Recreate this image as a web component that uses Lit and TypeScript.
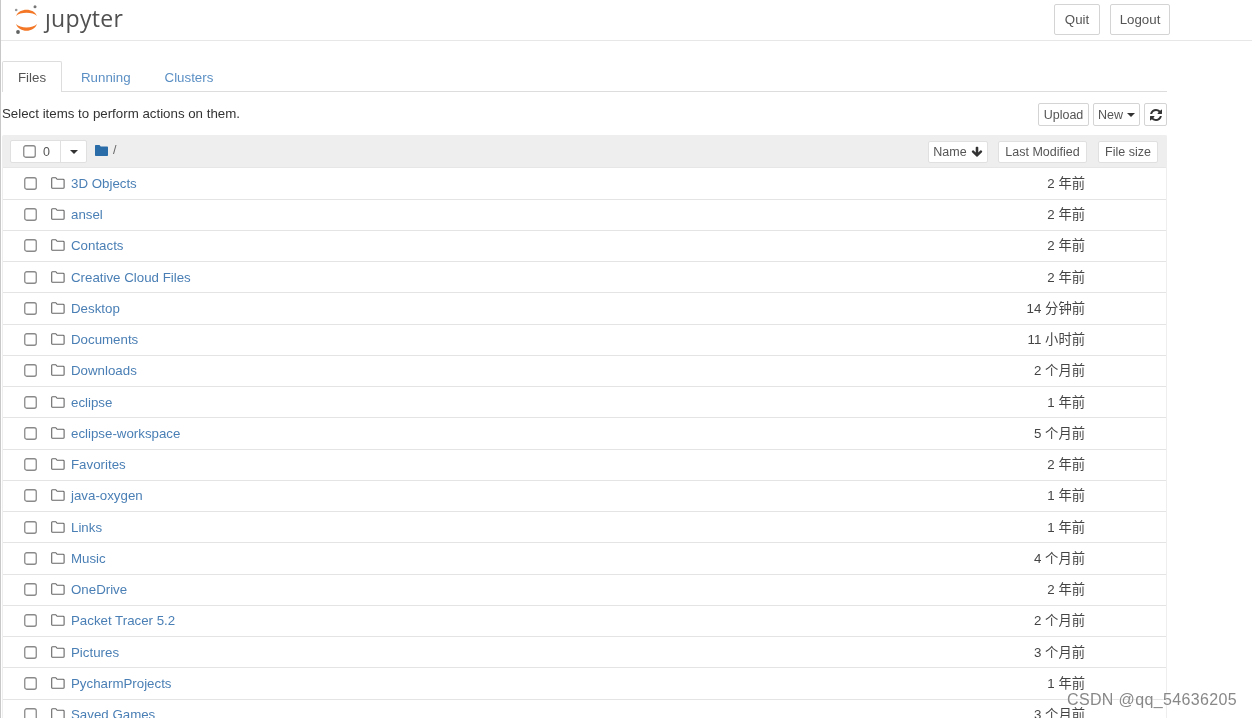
import { LitElement, html, css, svg } from "lit";
import { customElement } from "lit/decorators.js";

const rows: [string, string][] = [
  ["3D Objects", "2 年前"],
  ["ansel", "2 年前"],
  ["Contacts", "2 年前"],
  ["Creative Cloud Files", "2 年前"],
  ["Desktop", "14 分钟前"],
  ["Documents", "11 小时前"],
  ["Downloads", "2 个月前"],
  ["eclipse", "1 年前"],
  ["eclipse-workspace", "5 个月前"],
  ["Favorites", "2 年前"],
  ["java-oxygen", "1 年前"],
  ["Links", "1 年前"],
  ["Music", "4 个月前"],
  ["OneDrive", "2 年前"],
  ["Packet Tracer 5.2", "2 个月前"],
  ["Pictures", "3 个月前"],
  ["PycharmProjects", "1 年前"],
  ["Saved Games", "3 个月前"],
];

const checkbox = html`<svg class="cb" viewBox="0 0 13 13"><rect x=".75" y=".75" width="11.5" height="11.5" rx="2" fill="#fff" stroke="#8a8a8a" stroke-width="1.3"/></svg>`;
const folderO = html`<svg class="fo" viewBox="0 0 14 12"><path d="M1.6.7h3.2l1.3 1.6h6.1c.5 0 .9.4.9.9v7.2c0 .5-.4.9-.9.9H1.6c-.5 0-.9-.4-.9-.9V1.6c0-.5.4-.9.9-.9z" fill="none" stroke="#666" stroke-width="1.1"/></svg>`;
const logo = svg`<svg class="logo" viewBox="0 0 26 30">
  <path d="M2 11C5 2.5 20 2.5 23 11 19 6.8 6 6.8 2 11z" fill="#f37726"/>
  <path d="M2 19C5 28 20 28 23 19 19 23.5 6 23.5 2 19z" fill="#f37726"/>
  <circle cx="21" cy="1.8" r="1.5" fill="#767677"/>
  <circle cx="2.2" cy="5" r="1.3" fill="#989798"/>
  <circle cx="4" cy="27" r="1.9" fill="#616262"/>
</svg>`;

@customElement("app-root")
export class AppRoot extends LitElement {
  static styles = css`
    :host {
      display: block;
      height: 718px;
      overflow: hidden;
      position: relative;
      background: #fff;
      font-family: "Liberation Sans", Arial, "Noto Sans CJK SC", sans-serif;
      font-size: 13.3px;
      color: #333;
      border-left: 1px solid #c8c8c8;
      box-sizing: border-box;
      filter: blur(0.3px);
    }
    .header {
      height: 40px;
      width: 1251px;
      border-bottom: 1px solid #e7e7e7;
      display: flex;
      align-items: flex-start;
      box-sizing: content-box;
    }
    .logo { width: 26px; height: 30px; margin: 5px 0 0 13px; flex: none; }
    .word {
      font-family: "Open Sans", sans-serif;
      font-size: 23px;
      line-height: 30px;
      color: #505050;
      margin: 3px 0 0 5px;
      letter-spacing: 0.3px;
    }
    .spacer { flex: 1; }
    .hbtn {
      height: 31px;
      box-sizing: border-box;
      border: 1px solid #d4d4d4;
      border-radius: 2px;
      display: flex;
      align-items: center;
      justify-content: center;
      margin-top: 4px;
      color: #555;
    }
    .quit { width: 46px; margin-right: 10px; }
    .logout { width: 60px; margin-right: 82px; }
    .tabs {
      margin: 20px 0 0 1px;
      width: 1165px;
      height: 30px;
      border-bottom: 1px solid #ddd;
      display: flex;
      box-sizing: content-box;
    }
    .tab {
      height: 30px;
      padding: 2px 20px 0 0;
      display: flex;
      align-items: center;
      color: #5b8fc4;
      box-sizing: border-box;
    }
    .tab.active {
      width: 60px;
      justify-content: center;
      padding: 1px 0 0;
      height: 31px;
      color: #555;
      background: #fff;
      border: 1px solid #ddd;
      border-bottom: none;
      border-radius: 2px 2px 0 0;
      margin-right: 19px;
    }
    .tab.clusters { padding-left: 14px; }
    .bar {
      margin: 11px 0 0 1px;
      width: 1165px;
      height: 24px;
      display: flex;
      align-items: flex-start;
    }
    .bar .msg { flex: 1; line-height: 22px; color: #333; }
    .btn {
      box-sizing: border-box;
      height: 23px;
      border: 1px solid #d4d4d4;
      border-radius: 2px;
      display: flex;
      align-items: center;
      justify-content: center;
      font-size: 12.5px;
      color: #555;
      background: #fff;
      gap: 4px;
    }
    .caret {
      width: 0;
      height: 0;
      border-left: 4px solid transparent;
      border-right: 4px solid transparent;
      border-top: 4px solid #333;
    }
    .upload { width: 51px; margin-right: 4px; }
    .new { width: 47px; margin-right: 4px; }
    .refresh { width: 23px; }
    .refresh svg { width: 12px; height: 12px; }
    .list {
      margin: 8px 0 0 1px;
      width: 1165px;
      box-sizing: border-box;
      border: 1px solid #eee;
      border-bottom: none;
      border-radius: 2px 2px 0 0;
    }
    .lhead {
      height: 32.3px;
      background: #eee;
      display: flex;
      align-items: center;
      padding: 0 8px 0 7px;
      border-bottom: 1px solid #e6e6e6;
      box-sizing: border-box;
    }
    .select {
      display: flex;
      width: 77px;
      height: 23px;
      background: #fff;
      border: 1px solid #e0e0e0;
      border-radius: 2px;
      box-sizing: border-box;
    }
    .select .l {
      width: 50px;
      display: flex;
      align-items: center;
      padding-left: 12px;
      gap: 7px;
      box-sizing: border-box;
      border-right: 1px solid #e0e0e0;
      font-size: 12.5px;
      color: #555;
    }
    .select .r { flex: 1; display: flex; align-items: center; justify-content: center; }
    .crumb {
      display: flex;
      align-items: center;
      gap: 5px;
      margin: -3px 0 0 8px;
      flex: 1;
      color: #666;
      font-size: 12.5px;
    }
    .crumb svg { width: 13px; height: 11px; }
    .name { width: 60px; margin-right: 10px; }
    .name svg { width: 12px; height: 12px; }
    .mod { width: 89px; margin-right: 11px; }
    .size { width: 60px; }
    .lhead .btn { height: 22px; border-color: #e0e0e0; }
    .row {
      height: 31.25px;
      box-sizing: border-box;
      border-bottom: 1px solid #e4e4e4;
      display: flex;
      align-items: center;
      padding: 0 81px 0 21px;
    }
    .cb { width: 13px; height: 13px; flex: none; display: block; }
    .fo { width: 14px; height: 12px; flex: none; margin: -1px 0 0 14px; display: block; }
    .row a {
      color: #4a7fb5;
      text-decoration: none;
      margin-left: 6px;
      flex: 1;
    }
    .row .t { color: #444; margin-top: -2px; }
    .mark {
      position: absolute;
      left: 1066px;
      top: 690px;
      font-size: 16px;
      line-height: 20px;
      letter-spacing: 0.36px;
      color: #888;
      text-shadow: 0 0 2px #fff;
      white-space: nowrap;
    }
  `;

  render() {
    return html`
      <div class="header">
        ${logo}
        <span class="word">ȷupyter</span>
        <span class="spacer"></span>
        <div class="hbtn quit">Quit</div>
        <div class="hbtn logout">Logout</div>
      </div>
      <div class="tabs">
        <div class="tab active">Files</div>
        <div class="tab">Running</div>
        <div class="tab clusters">Clusters</div>
      </div>
      <div class="bar">
        <span class="msg">Select items to perform actions on them.</span>
        <div class="btn upload">Upload</div>
        <div class="btn new">New <span class="caret"></span></div>
        <div class="btn refresh">
          <svg viewBox="0 0 1536 1536"><path fill="#333" d="M1511 928q0 5-1 7-64 268-268 434.5t-478 166.5q-146 0-282.5-55t-243.5-157l-129 129q-19 19-45 19t-45-19-19-45v-448q0-26 19-45t45-19h448q26 0 45 19t19 45-19 45l-137 137q71 66 161 102t187 36q134 0 250-65t186-179q11-17 53-117 8-23 30-23h192q13 0 22.5 9.5t9.5 22.5zm25-800v448q0 26-19 45t-45 19h-448q-26 0-45-19t-19-45 19-45l138-138q-148-137-349-137-134 0-250 65t-186 179q-11 17-53 117-8 23-30 23h-199q-13 0-22.5-9.5t-9.5-22.5v-7q65-268 270-434.5t480-166.5q146 0 284 55.5t245 156.5l130-129q19-19 45-19t45 19 19 45z"/></svg>
        </div>
      </div>
      <div class="list">
        <div class="lhead">
          <div class="select">
            <div class="l">${checkbox}<span>0</span></div>
            <div class="r"><span class="caret"></span></div>
          </div>
          <div class="crumb">
            <svg viewBox="0 0 13 11"><path fill="#2a6ca8" d="M1 0h3.5l1.2 1.5H12c.6 0 1 .4 1 1V10c0 .6-.4 1-1 1H1c-.6 0-1-.4-1-1V1c0-.6.4-1 1-1z"/></svg>
            <span>/</span>
          </div>
          <div class="btn name">Name
            <svg viewBox="0 0 1792 1792"><path fill="#333" d="M1675 832q0 53-37 90l-651 652q-39 37-91 37-53 0-90-37l-651-652q-38-36-38-90 0-53 38-91l74-75q39-37 91-37 53 0 90 37l294 294v-704q0-52 38-90t90-38h128q52 0 90 38t38 90v704l294-294q37-37 90-37 52 0 91 37l75 75q37 39 37 91z"/></svg>
          </div>
          <div class="btn mod">Last Modified</div>
          <div class="btn size">File size</div>
        </div>
        ${rows.map(
          ([n, t]) => html`<div class="row">${checkbox}${folderO}<a>${n}</a><span class="t">${t}</span></div>`
        )}
      </div>
      <div class="mark">CSDN @qq_54636205</div>
    `;
  }
}
